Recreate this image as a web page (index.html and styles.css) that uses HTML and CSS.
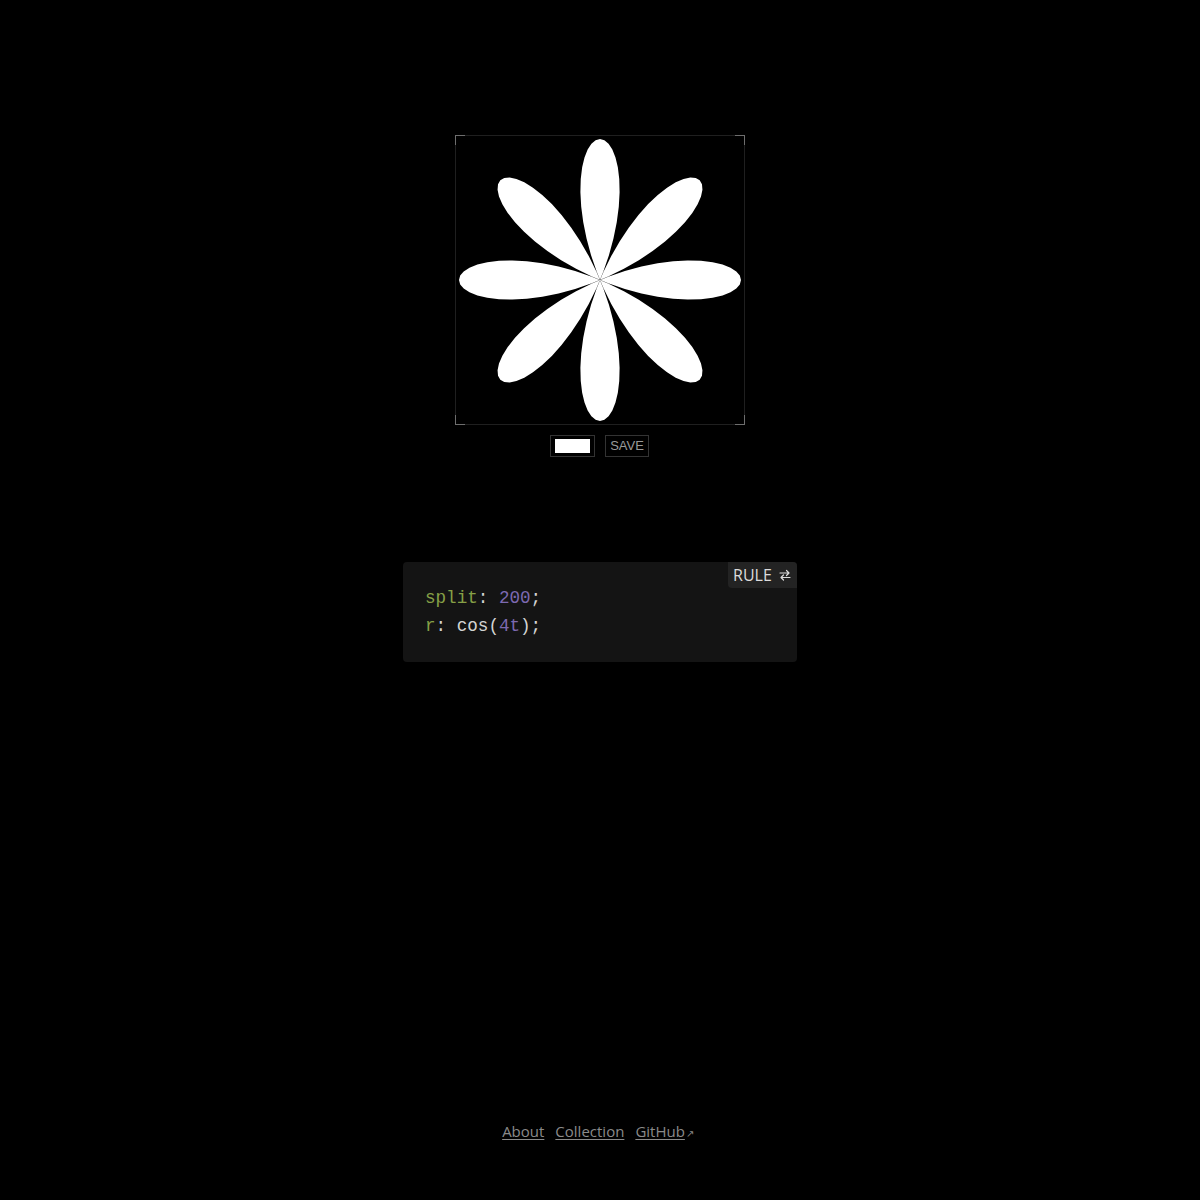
FILE: index.html
```html
<!DOCTYPE html>
<html lang="en">
<head>
<meta charset="utf-8">
<title>Rose</title>
<link rel="stylesheet" href="styles.css">
</head>
<body>
<main class="page">
  <section class="stage">
    <div class="frame">
      <svg class="art" viewBox="-145 -145 290 290" width="290" height="290">
        <path id="rose" fill="#fff" stroke="none" d=""/>
      </svg>
      <span class="corner tl"></span>
      <span class="corner tr"></span>
      <span class="corner bl"></span>
      <span class="corner br"></span>
    </div>
    <div class="controls">
      <button class="swatch"><span class="swatch-fill"></span></button>
      <button class="save">SAVE</button>
    </div>
  </section>

  <section class="code">
    <button class="rule">RULE
      <svg class="swap" viewBox="0 0 12 12" width="12" height="12">
        <path d="M1 4 H10 M7.5 1.5 L10 4 L7.5 6.5 M11 8.5 H2 M4.5 6 L2 8.5 L4.5 11" fill="none" stroke="#ddd" stroke-width="1.2" stroke-linecap="round" stroke-linejoin="round"/>
      </svg>
    </button>
    <pre class="src"><span class="k">split</span><span class="p">:</span> <span class="n">200</span><span class="p">;</span>
<span class="k">r</span><span class="p">:</span> <span class="f">cos</span><span class="p">(</span><span class="n">4t</span><span class="p">);</span></pre>
  </section>

  <footer class="foot">
    <a href="#">About</a>
    <a href="#">Collection</a>
    <a href="#">GitHub<span class="ext">↗</span></a>
  </footer>
</main>
<script src="script.js"></script>
</body>
</html>
```

FILE: styles.css
```css
html, body {
  margin: 0;
  padding: 0;
  background: #000;
}

.page {
  min-height: 1200px;
  display: flex;
  flex-direction: column;
  align-items: center;
  padding-top: 135px;
  box-sizing: border-box;
  font-family: "Open Sans", "Noto Sans", sans-serif;
}

.stage {
  display: flex;
  flex-direction: column;
  align-items: center;
}

.frame {
  position: relative;
  width: 290px;
  height: 290px;
  box-sizing: border-box;
  border: 1px solid #1f1f1f;
}

.art {
  display: block;
  position: absolute;
  left: -1px;
  top: -1px;
}

.corner {
  position: absolute;
  width: 9px;
  height: 9px;
  border-color: #6e6e6e;
  border-style: solid;
  border-width: 0;
}
.corner.tl { left: -1px; top: -1px; border-left-width: 1px; border-top-width: 1px; }
.corner.tr { right: -1px; top: -1px; border-right-width: 1px; border-top-width: 1px; }
.corner.bl { left: -1px; bottom: -1px; border-left-width: 1px; border-bottom-width: 1px; }
.corner.br { right: -1px; bottom: -1px; border-right-width: 1px; border-bottom-width: 1px; }

.controls {
  display: flex;
  gap: 10px;
  margin-top: 10px;
  margin-right: 1px;
}

.swatch, .save {
  height: 22px;
  box-sizing: border-box;
  background: #000;
  border: 1px solid #333;
  border-radius: 0;
  margin: 0;
  cursor: pointer;
}

.swatch {
  width: 45px;
  padding: 3px 4px;
  display: flex;
}

.swatch-fill {
  display: block;
  flex: 1;
  background: #fff;
}

.save {
  width: 44px;
  padding: 0;
  color: #9a9a9a;
  font-family: "Liberation Sans", Arial, sans-serif;
  font-size: 13px;
  line-height: 20px;
}

.code {
  position: relative;
  width: 394px;
  margin-top: 105px;
  background: #141414;
  border-radius: 4px;
  box-sizing: border-box;
  padding: 22px 22px 22px;
}

.rule {
  position: absolute;
  top: 0;
  right: 0;
  height: 26px;
  width: 69px;
  padding: 0 0 0 5px;
  display: flex;
  align-items: center;
  gap: 7px;
  background: #232323;
  border: none;
  border-radius: 0 4px 0 4px;
  color: #dcdcdc;
  font-family: "Open Sans", "Noto Sans", sans-serif;
  font-size: 16px;
  line-height: 26px;
  box-sizing: border-box;
}

.swap {
  display: block;
}

.src {
  margin: 0;
  font-family: "Liberation Mono", "Courier New", monospace;
  font-size: 17.6px;
  line-height: 28px;
  color: #d4d4d4;
}

.src .k { color: #86a046; }
.src .n { color: #7c69b0; }
.src .p { color: #d4d4d4; }
.src .f { color: #d4d4d4; }

.foot {
  margin-top: auto;
  margin-bottom: 57px;
  margin-right: 4px;
  display: flex;
  gap: 11px;
  font-size: 15px;
  line-height: 20px;
}

.foot a {
  color: #8a8a8a;
  text-decoration: underline;
  text-underline-offset: 2px;
}

.foot .ext {
  font-size: 10px;
  display: inline-block;
  margin-left: 1px;
  text-decoration: none;
}
```

FILE: script.js
```js
(function () {
  var n = 200, R = 141, d = "";
  for (var i = 0; i <= n; i++) {
    var t = (Math.PI * 2 * i) / n;
    var r = R * Math.cos(4 * t);
    var x = r * Math.cos(t);
    var y = r * Math.sin(t);
    d += (i === 0 ? "M" : "L") + x.toFixed(2) + " " + y.toFixed(2);
  }
  d += "Z";
  document.getElementById("rose").setAttribute("d", d);
})();
```
